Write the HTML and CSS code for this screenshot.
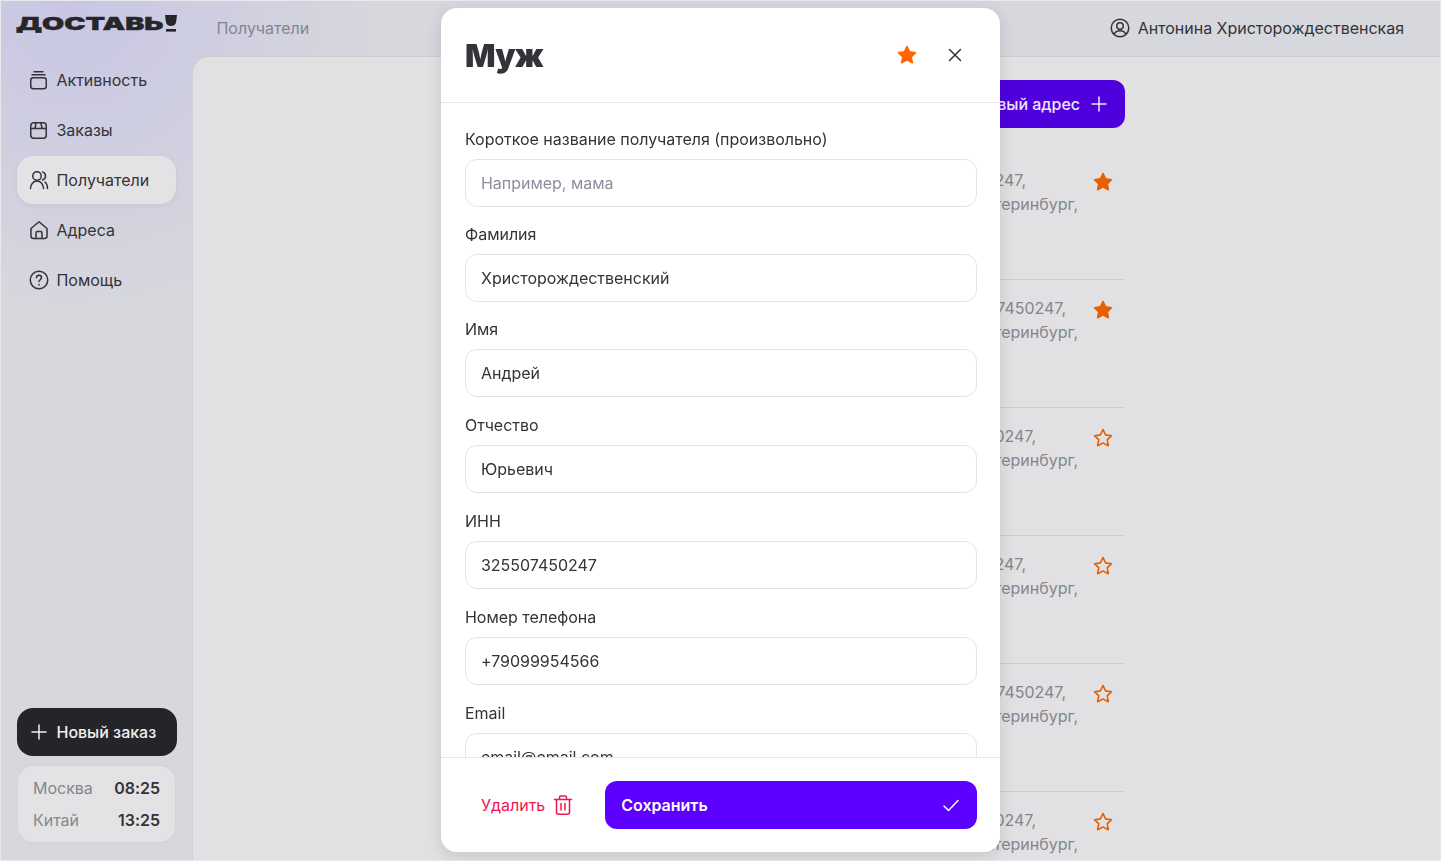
FILE: index.html
```html
<!DOCTYPE html>
<html lang="ru">
<head>
    <meta charset="UTF-8">
    <title>Получатели</title>
    <link rel="stylesheet" href="styles.css">
</head>
<body>
<div class="app">
    <aside class="sidebar">
        <div class="logo">
            <span class="logo-text">ДОСТАВЬ</span>
            <svg class="logo-mark" viewBox="0 0 12 18"><path d="M0 0h12l-.8 6.500C10.900 9.500 8.500 11 6 11S1.100 9.500.8 6.500z"/><rect x="1" y="14" width="10" height="2.600"/></svg>
        </div>
        <nav class="nav">
            <a class="nav-item">
                <svg class="icon" viewBox="0 0 24 24"><rect x="3.750" y="9.750" width="15.500" height="11" rx="2.500"/><path d="M5 6.750h13M7 3.750h9"/></svg>
                Активность
            </a>
            <a class="nav-item">
                <svg class="icon" viewBox="0 0 24 24"><rect x="3.750" y="4.750" width="15.500" height="15.500" rx="3"/><path d="M3.750 10.500h15.500M9 4.750 8 10.500M14 4.750l1 5.750"/></svg>
                Заказы
            </a>
            <a class="nav-item nav-item-active">
                <svg class="icon" viewBox="0 0 24 24"><circle cx="10" cy="8" r="4.250"/><path d="M3.500 20.500c0-4.200 2.800-7.500 6.500-7.500s6.500 3.300 6.500 7.500M15.500 3.900c1.800.5 3 2.100 3 4.100s-1.200 3.500-3 4M18 14c1.600 1.300 2.500 3.600 2.500 6.500"/></svg>
                Получатели
            </a>
            <a class="nav-item">
                <svg class="icon" viewBox="0 0 24 24"><path d="M4 10.500 12 3.750l8 6.750V18a2.500 2.500 0 0 1-2.500 2.500h-11A2.500 2.500 0 0 1 4 18z"/><path d="M9 20.500V15a1.500 1.500 0 0 1 1.500-1.500h3A1.500 1.500 0 0 1 15 15v5.500"/></svg>
                Адреса
            </a>
            <a class="nav-item">
                <svg class="icon" viewBox="0 0 24 24"><circle cx="12" cy="12" r="8.750"/><path d="M9.500 9.700c0-1.500 1.100-2.400 2.500-2.400s2.500.9 2.500 2.300c0 2.100-2.500 2.100-2.500 4"/><path d="M12 16.500v.4"/></svg>
                Помощь
            </a>
        </nav>
        <div class="sidebar-bottom">
            <a class="new-order">
                <svg class="icon" viewBox="0 0 24 24"><path d="M12 5v14M5 12h14"/></svg>
                Новый заказ
            </a>
            <div class="clocks">
                <div class="clock"><span>Москва</span><b>08:25</b></div>
                <div class="clock"><span>Китай</span><b>13:25</b></div>
            </div>
        </div>
    </aside>

    <div class="main">
        <header class="topbar">
            <span class="crumb">Получатели</span>
            <span class="user">
                <svg class="icon" viewBox="0 0 24 24"><circle cx="12" cy="12" r="8.750"/><circle cx="12" cy="10" r="3.250"/><path d="M6 18.500c1-2.300 3.300-3.750 6-3.750s5 1.450 6 3.750"/></svg>
                Антонина Христорождественская
            </span>
        </header>
        <section class="content">
            <div class="toolbar">
                <a class="add-btn">
                    Новый адрес
                    <svg class="icon" viewBox="0 0 24 24"><path d="M12 5v14M5 12h14"/></svg>
                </a>
            </div>
            <div class="rows">
                <div class="row">
                    <div class="row-text"><div class="end-a">ИНН 325507450247,</div><div>г. Екатеринбург,</div></div>
                    <svg class="star star-on" viewBox="0 0 24 24"><path d="M12 3.500l2.600 5.400 5.900.8-4.300 4.100 1.100 5.900L12 16.900l-5.300 2.800 1.100-5.900-4.300-4.100 5.900-.8z"/></svg>
                </div>
                <div class="row">
                    <div class="row-text"><div class="end-b">ИНН 325507450247,</div><div>г. Екатеринбург,</div></div>
                    <svg class="star star-on" viewBox="0 0 24 24"><path d="M12 3.500l2.600 5.400 5.900.8-4.300 4.100 1.100 5.900L12 16.900l-5.300 2.800 1.100-5.900-4.300-4.100 5.900-.8z"/></svg>
                </div>
                <div class="row">
                    <div class="row-text"><div class="end-c">ИНН 325507450247,</div><div>г. Екатеринбург,</div></div>
                    <svg class="star" viewBox="0 0 24 24"><path d="M12 3.500l2.600 5.400 5.900.8-4.300 4.100 1.100 5.900L12 16.900l-5.300 2.800 1.100-5.900-4.300-4.100 5.900-.8z"/></svg>
                </div>
                <div class="row">
                    <div class="row-text"><div class="end-a">ИНН 325507450247,</div><div>г. Екатеринбург,</div></div>
                    <svg class="star" viewBox="0 0 24 24"><path d="M12 3.500l2.600 5.400 5.900.8-4.300 4.100 1.100 5.900L12 16.900l-5.300 2.800 1.100-5.900-4.300-4.100 5.900-.8z"/></svg>
                </div>
                <div class="row">
                    <div class="row-text"><div class="end-b">ИНН 325507450247,</div><div>г. Екатеринбург,</div></div>
                    <svg class="star" viewBox="0 0 24 24"><path d="M12 3.500l2.600 5.400 5.900.8-4.300 4.100 1.100 5.900L12 16.900l-5.300 2.800 1.100-5.900-4.300-4.100 5.900-.8z"/></svg>
                </div>
                <div class="row">
                    <div class="row-text"><div class="end-c">ИНН 325507450247,</div><div>г. Екатеринбург,</div></div>
                    <svg class="star" viewBox="0 0 24 24"><path d="M12 3.500l2.600 5.400 5.900.8-4.300 4.100 1.100 5.900L12 16.900l-5.300 2.800 1.100-5.900-4.300-4.100 5.900-.8z"/></svg>
                </div>
            </div>
        </section>
    </div>
</div>

<div class="overlay">
    <div class="modal">
        <div class="modal-head">
            <h1 class="modal-title">Муж</h1>
            <svg class="star star-modal" viewBox="0 0 24 24"><path d="M12 3.500l2.600 5.400 5.900.8-4.300 4.100 1.100 5.900L12 16.900l-5.300 2.800 1.100-5.900-4.300-4.100 5.900-.8z"/></svg>
            <svg class="icon close" viewBox="0 0 24 24"><path d="M6.500 6.500l11 11M17.500 6.500l-11 11"/></svg>
        </div>
        <div class="modal-body">
            <div class="field field-tight"><label>Короткое название получателя (произвольно)</label><div class="input input-empty">Например, мама</div></div>
            <div class="field field-tight"><label>Фамилия</label><div class="input">Христорождественский</div></div>
            <div class="field"><label>Имя</label><div class="input">Андрей</div></div>
            <div class="field"><label>Отчество</label><div class="input">Юрьевич</div></div>
            <div class="field"><label>ИНН</label><div class="input">325507450247</div></div>
            <div class="field"><label>Номер телефона</label><div class="input">+79099954566</div></div>
            <div class="field"><label>Email</label><div class="input">email@email.com</div></div>
        </div>
        <div class="modal-foot">
            <a class="delete-btn">
                Удалить
                <svg class="icon" viewBox="0 0 24 24"><path d="M3.500 6.500h17M8.500 6.500V4.250c0-.7.500-1.250 1.250-1.250h4.500c.75 0 1.250.55 1.250 1.250V6.500"/><path d="M5.500 6.500v12.750a2 2 0 0 0 2 2h9a2 2 0 0 0 2-2V6.500"/><path d="M10 10.500v6.500M14 10.500v6.500"/></svg>
            </a>
            <a class="save-btn">
                Сохранить
                <svg class="icon" viewBox="0 0 24 24"><path d="M5 13l4.500 4.500L19 7.500"/></svg>
            </a>
        </div>
    </div>
</div>
</body>
</html>
```

FILE: styles.css
```css
*{
    box-sizing: border-box;
}
html, body{
    height: 100%;
    margin: 0;
    overflow: hidden;
}
body{
    font: 16px/24px "Inter", "Liberation Sans", sans-serif;
    letter-spacing: -0.02px;
    color: #333338;
    background-color: #e9e9ed;
}
a{
    color: inherit;
    cursor: pointer;
}
.icon{
    width: 24px;
    height: 24px;
    flex: none;
    fill: none;
    stroke: currentColor;
    stroke-width: 1.5;
    stroke-linecap: round;
    stroke-linejoin: round;
}

.app{
    display: grid;
    grid-template-columns: 192px minmax(0, 1fr);
    grid-template-rows: minmax(0, 1fr);
    height: calc(100% - 2px);
    margin: 1px;
    background: radial-gradient(circle at 70px 0, #c8c6e4 0, #d7d8dd 320px);
    overflow: hidden;
}

/* left column */
.sidebar{
    display: flex;
    flex-direction: column;
    padding: 0 16px 17px;
}
.logo{
    display: flex;
    align-items: flex-start;
    flex: none;
    height: 55px;
    margin-left: -1px;
    padding-top: 13px;
    color: #26262a;
    overflow: hidden;
}
.logo-text{
    width: 149px;
    font-size: 18px;
    line-height: 20px;
    font-weight: 900;
    -webkit-text-stroke: 0.4px #26262a;
    transform: scaleX(1.59);
    transform-origin: left top;
}
.logo-mark{
    width: 12px;
    height: 18px;
    margin-top: 1px;
    fill: currentColor;
}
.nav{
    display: flex;
    flex-direction: column;
    gap: 2px;
}
.nav-item{
    display: flex;
    align-items: center;
    gap: 6px;
    height: 48px;
    padding-left: 9.500px;
    border-radius: 16px;
}
.nav-item-active{
    margin-right: 1px;
    background-color: #e3e3e5;
    box-shadow: 0 2px 6px rgba(0, 0, 0, 0.05);
}
.sidebar-bottom{
    margin-top: auto;
}
.new-order{
    display: flex;
    align-items: center;
    gap: 6px;
    height: 48px;
    padding-left: 9.500px;
    color: #f0f0f2;
    font-weight: 500;
    background-color: #252529;
    border-radius: 16px;
}
.clocks{
    display: flex;
    flex-direction: column;
    gap: 8px;
    margin: 9px 1px 0 0;
    padding: 10px 15px;
    background-color: #e3e3e5;
    border: 1px solid #d2d2d6;
    border-radius: 16px;
}
.clock{
    display: flex;
    justify-content: space-between;
    color: #85858f;
}
.clock b{
    color: #333338;
    font-weight: 600;
}

/* header and list under the dialog */
.main{
    display: flex;
    flex-direction: column;
    min-width: 0;
    min-height: 0;
}
.topbar{
    display: flex;
    align-items: center;
    justify-content: space-between;
    flex: none;
    height: 56px;
    padding: 0 36px 2px 23.500px;
    border-bottom: 1px solid #cdcdd2;
}
.crumb{
    color: #85858f;
}
.user{
    display: flex;
    align-items: center;
    gap: 6px;
}
.content{
    flex: 1;
    min-height: 0;
    padding: 23px 315px 0 500px;
    background-color: #e1e1e3;
    border-top-left-radius: 16px;
    box-shadow: -1px 0 0 #d0d0d5;
    overflow: hidden;
}
.toolbar{
    display: flex;
    justify-content: flex-end;
    margin-bottom: 24px;
}
.add-btn{
    display: flex;
    align-items: center;
    gap: 7px;
    height: 48px;
    padding: 0 14px 0 16px;
    color: #ece6fa;
    font-weight: 500;
    background-color: #5000dc;
    border-radius: 12px;
}
.rows{
    margin-right: 1px;
}
.row{
    display: flex;
    align-items: flex-start;
    height: 128px;
    padding: 16px 9px 0 0;
    color: #85858f;
    border-top: 1px solid #cdcdd0;
}
.row:first-child{
    height: 127px;
    border-top: 0;
}
.row-text{
    flex: 1;
    padding-right: 13px;
    text-align: right;
    white-space: nowrap;
}
.end-a{
    margin-right: 52px;
}
.end-b{
    margin-right: 12px;
}
.end-c{
    margin-right: 42px;
}
.star{
    width: 24px;
    height: 24px;
    flex: none;
    margin-top: 2px;
    fill: none;
    stroke: #ea5e00;
    stroke-width: 1.6;
    stroke-linejoin: round;
}
.star-on{
    fill: #ea5e00;
}

/* dialog */
.overlay{
    position: fixed;
    top: 0;
    right: 0;
    bottom: 0;
    left: 0;
    display: flex;
    justify-content: center;
    padding: 8px 0 9px;
}
.modal{
    display: flex;
    flex-direction: column;
    width: 559px;
    background-color: #ffffff;
    border-radius: 16px;
    box-shadow: 0 4px 16px rgba(0, 0, 0, 0.12);
    overflow: hidden;
}
.modal-head{
    display: flex;
    align-items: center;
    flex: none;
    gap: 24px;
    height: 95px;
    padding: 2px 33px 0 24px;
    border-bottom: 1px solid #e6e6e9;
}
.modal-title{
    flex: 1;
    margin: 0;
    font-size: 32px;
    line-height: 40px;
    font-weight: 900;
    letter-spacing: -0.8px;
}
.star-modal{
    margin: -2px 0 0;
    fill: #ff6600;
    stroke: #ff6600;
}
.close{
    margin-top: -2px;
}
.modal-body{
    flex: 1;
    min-height: 0;
    padding: 24px 23px 0 24px;
    overflow: hidden;
}
.field{
    margin-bottom: 16px;
}
.field-tight{
    margin-bottom: 15px;
}
.field label{
    display: block;
    margin-bottom: 8px;
}
.input{
    height: 48px;
    padding: 11px 15px;
    background-color: #ffffff;
    border: 1px solid #e4e4e8;
    border-radius: 12px;
}
.input-empty{
    color: #8d8d9f;
}
.modal-foot{
    display: flex;
    flex: none;
    gap: 14px;
    padding: 23px 23px 23px 24px;
    background-color: #ffffff;
    border-top: 1px solid #e6e6e9;
}
.delete-btn{
    display: flex;
    align-items: center;
    gap: 6px;
    height: 48px;
    padding: 0 16px;
    color: #f0174f;
}
.save-btn{
    display: flex;
    align-items: center;
    justify-content: space-between;
    flex: 1;
    height: 48px;
    padding: 0 14px 0 16px;
    color: #ffffff;
    font-weight: 600;
    background-color: #5c00ff;
    border-radius: 12px;
}
```
